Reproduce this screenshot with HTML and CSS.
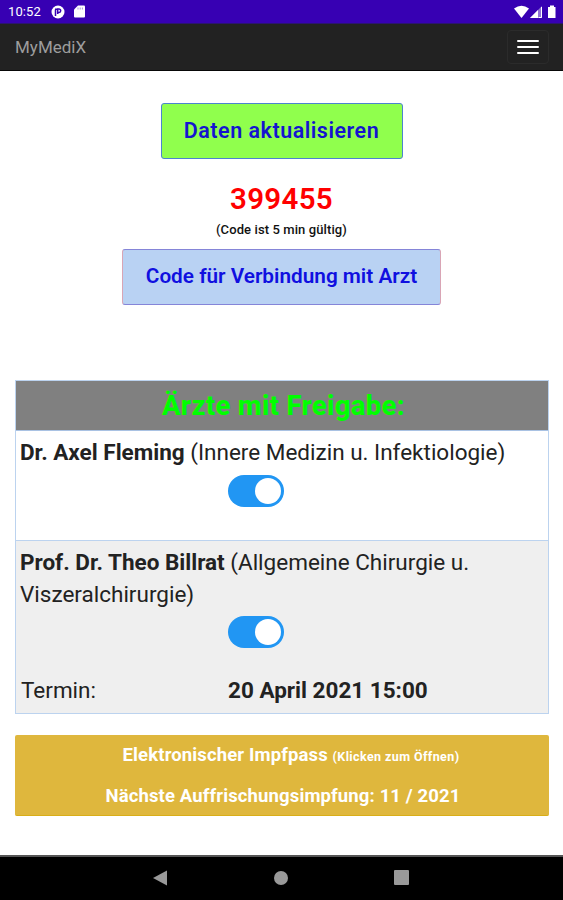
FILE: index.html
```html
<!DOCTYPE html>
<html lang="de">
<head>
<meta charset="utf-8">
<title>MyMediX</title>
<link rel="stylesheet" href="styles.css">
</head>
<body>
<div class="status">
  <span class="clock">10:52</span>
  <svg class="ic-app" width="14" height="14" viewBox="0 0 14 14"><circle cx="7" cy="7" r="6.500" fill="#fff"/><path d="M4.500 11V4.500M6.700 9V4h1.300a1.700 1.700 0 0 1 0 3.400H6.700M4 4.200h3" fill="none" stroke="#3700b3" stroke-width="1.500"/></svg>
  <svg class="ic-sd" width="11" height="13" viewBox="0 0 11 13"><path d="M4 .5h6a1 1 0 0 1 1 1v10a1 1 0 0 1-1 1H1a1 1 0 0 1-1-1V4.500z" fill="#fff"/><path d="M4 2.500v2M6.200 2.500v2M8.400 2.500v2" stroke="#3700b3" stroke-width=".7" stroke-opacity=".6"/></svg>
  <svg class="ic-net" width="44" height="14" viewBox="0 0 44 14"><path d="M0 3.500Q7.500-2 15 3.500L7.500 13z" fill="#fff"/><path d="M16 13L28 1v12z" fill="#fff" fill-opacity=".45"/><path d="M16 13l8-8v8z" fill="#fff"/><path d="M24.500 12.500h3V2" fill="none" stroke="#fff"/><path d="M34 2h2V.5h4V2h1.500v11H34z" fill="#fff"/></svg>
</div>
<nav class="navbar">
  <span class="brand">MyMediX</span>
  <button class="toggle" aria-label="Menü"><i></i><i></i><i></i></button>
</nav>
<main>
  <button class="btn refresh">Daten aktualisieren</button>
  <div class="code">399455</div>
  <div class="note">(Code ist 5 min gültig)</div>
  <button class="btn connect">Code für Verbindung mit Arzt</button>
  <section class="doctors">
    <h2>Ärzte mit Freigabe:</h2>
    <div class="doctor first">
      <p><b>Dr. Axel Fleming</b> (Innere Medizin u. Infektiologie)</p>
      <div class="switch"></div>
    </div>
    <div class="doctor second">
      <p><b>Prof. Dr. Theo Billrat</b> (Allgemeine Chirurgie u.<br>Viszeralchirurgie)</p>
      <div class="switch"></div>
      <div class="termin"><span class="label">Termin:</span><b>20 April 2021 15:00</b></div>
    </div>
  </section>
  <section class="pass">
    <div class="pass-title">Elektronischer Impfpass <small>(Klicken zum Öffnen)</small></div>
    <div class="pass-next">Nächste Auffrischungsimpfung: 11 / 2021</div>
  </section>
</main>
<footer>
  <svg width="15" height="16" viewBox="0 0 15 16"><path d="M0 8L14 .5v15z" fill="#999"/></svg>
  <svg width="14" height="14" viewBox="0 0 14 14"><circle cx="7" cy="7" r="7" fill="#999"/></svg>
  <svg width="15" height="15" viewBox="0 0 15 15"><rect width="15" height="15" rx="1" fill="#999"/></svg>
</footer>
</body>
</html>
```
FILE: styles.css
```css
* { box-sizing: border-box; }
body { margin: 0; height: 900px; display: flex; flex-direction: column; background: #fff; font-family: Roboto, "Liberation Sans", sans-serif; color: #222; white-space: nowrap; overflow: hidden; }
button { font-family: inherit; margin: 0; padding: 0; }
.status { height: 24px; background: #3700b3; display: flex; align-items: center; padding: 0 8px; color: #fff; border-bottom: 1px solid #2b1470; }
.clock { font-size: 13px; line-height: 24px; font-weight: 400; width: 43px; letter-spacing: .1px; }
.ic-sd { margin-left: 9px; }
.ic-net { margin-left: auto; margin-right: -3px; }
.navbar { height: 47px; background: #222; border-bottom: 1px solid #080808; display: flex; align-items: center; justify-content: space-between; padding: 0 14px 0 15px; }
.brand { font-size: 17px; letter-spacing: 0; color: #9d9d9d; }
.toggle { width: 42px; height: 34px; border: 1px solid #2b2b2b; border-radius: 4px; background: none; display: flex; flex-direction: column; align-items: center; justify-content: center; gap: 4px; }
.toggle i { width: 22px; height: 2px; background: #fff; border-radius: 1px; }
main { flex: 1; display: flex; flex-direction: column; align-items: center; padding: 32px 15px 0; }
.btn { height: 56px; font-size: 21.500px; font-weight: 600; border-radius: 3px; padding-bottom: 2px; }
.refresh { width: 242px; color: #1414d0; background: #90ff4d; border: 1px solid #4c83cf; letter-spacing: .5px; }
.code { margin-top: 22px; height: 36px; line-height: 36px; font-size: 29.500px; font-weight: 600; color: #f00; letter-spacing: .3px; }
.note { height: 22px; line-height: 26px; margin-bottom: 10px; font-size: 13px; font-weight: 500; color: #111; letter-spacing: .1px; }
.connect { width: 319px; color: #1010e0; background: #b9d2f3; border: 1px solid #8585d8; border-left-color: #d9a5b5; border-right-color: #d9a5b5; font-size: 20.750px; }
.doctors { width: 534px; height: 334px; margin-top: 75px; border: 1px solid #bcd3ef; font-size: 22.500px; }
.doctors h2 { margin: 0; height: 50px; line-height: 50px; background: #808080; border-bottom: 1px solid #a9c2e3; color: #0f0; font-size: 27.500px; font-weight: 800; text-align: center; letter-spacing: .3px; padding-left: 4px; }
.doctor { padding: 5px 5px 0 4.500px; }
.doctor p { margin: 0; line-height: 32px; }
.first { height: 110px; border-bottom: 1px solid #bcd3ef; }
.second { height: 172px; background: #efefef; }
.first p { margin-bottom: 7px; }
.second p { margin-bottom: 6px; }
.switch { width: 56px; height: 32px; border-radius: 16px; background: #2196f3; margin-left: 208px; padding: 3px; display: flex; justify-content: flex-end; }
.switch::after { content: ""; width: 26px; height: 26px; border-radius: 50%; background: #fff; }
.termin { display: flex; margin: 26px 0 0 1px; line-height: 32px; }
.label { width: 207px; }
.pass { width: 534px; height: 81px; margin-top: 21px; background: #dfb73d; border-bottom: 1px solid #d9ae18; border-radius: 2px; color: #fff; text-align: center; font-weight: 700; font-size: 18.500px; letter-spacing: .13px; }
.pass-title { line-height: 40px; height: 41px; padding-left: 19px; }
.pass-title small { font-size: 12.500px; letter-spacing: .4px; }
.pass-next { line-height: 40px; padding-left: 3px; }
footer { height: 45px; background: #000; border-top: 2px solid #555; display: flex; align-items: center; justify-content: space-between; padding: 0 154px 2px 153px; }
```
